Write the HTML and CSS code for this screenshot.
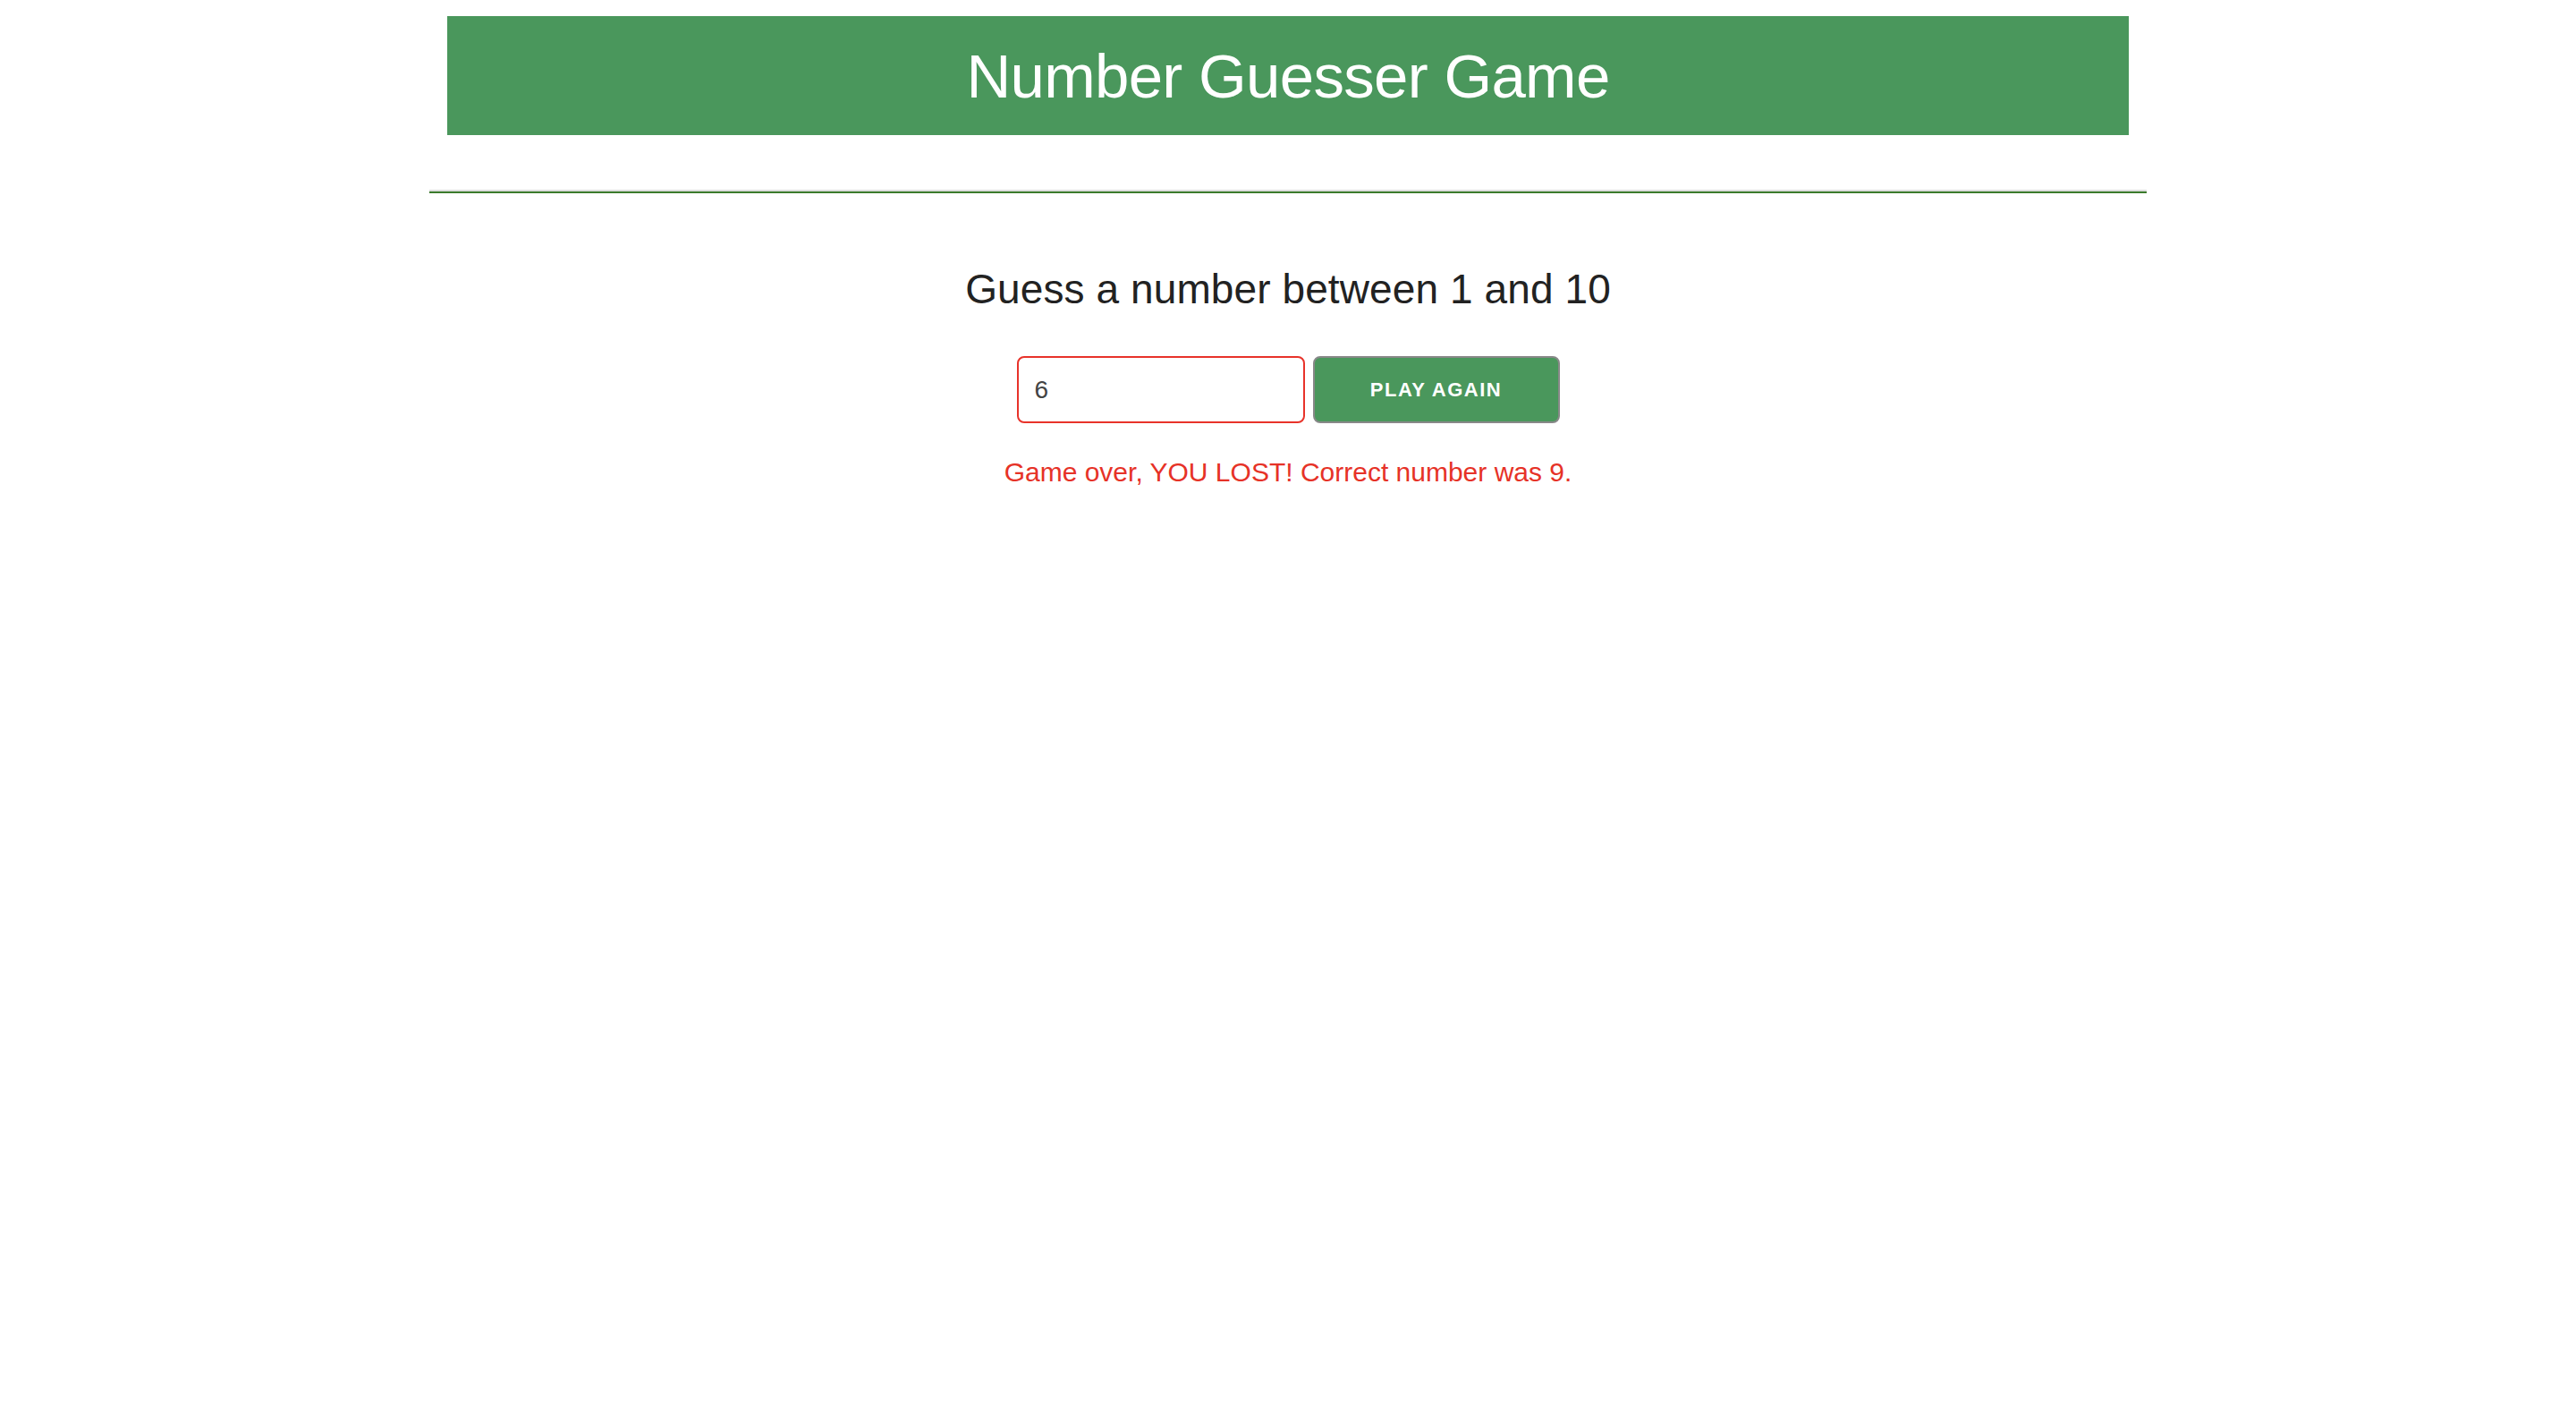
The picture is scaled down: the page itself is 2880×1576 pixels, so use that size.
FILE: index.html
```html
<!DOCTYPE html>
<html lang="en">
<head>
<meta charset="utf-8">
<title>Number Guesser Game</title>
<link rel="stylesheet" href="styles.css">
</head>
<body>
<div class="container">
  <header class="banner">
    <h1 class="title">Number Guesser Game</h1>
  </header>
  <div class="divider"></div>
  <main class="game">
    <h2 class="prompt">Guess a number between 1 and 10</h2>
    <div class="controls">
      <input class="guess-input" type="number" value="6">
      <button class="play-btn" type="button">Play Again</button>
    </div>
    <p class="message">Game over, YOU LOST! Correct number was 9.</p>
  </main>
</div>
</body>
</html>
```

FILE: styles.css
```css
html, body {
  margin: 0;
  padding: 0;
  background: #ffffff;
}

body {
  font-family: "Liberation Sans", Arial, Helvetica, sans-serif;
  color: #222222;
}

.container {
  max-width: 1920px;
  margin: 0 auto;
}

.banner {
  margin: 18px 20px 0;
  background: #4a975c;
  padding-top: 2px;
  height: 131px;
}

.title {
  margin: 0;
  font-size: 69px;
  font-weight: normal;
  line-height: 131px;
  text-align: center;
  color: #ffffff;
  letter-spacing: -0.7px;
}

.divider {
  margin-top: 61px;
  border-top: 2px solid #dddddd;
  border-bottom: 2px solid #3b7b2c;
}

.game {
  display: flex;
  flex-direction: column;
  align-items: center;
}

.prompt {
  margin: 80px 0 0;
  font-size: 46px;
  font-weight: normal;
  line-height: 54px;
  color: #222222;
  letter-spacing: 0.1px;
}

.controls {
  margin-top: 48px;
  display: flex;
  gap: 9px;
}

.guess-input {
  box-sizing: border-box;
  width: 322px;
  height: 75px;
  border: 2px solid #e8332a;
  border-radius: 8px;
  padding: 0 18px;
  font-family: "Liberation Sans", Arial, sans-serif;
  font-size: 28px;
  color: #444444;
  outline: none;
  -moz-appearance: textfield;
  appearance: textfield;
}

.guess-input::-webkit-inner-spin-button,
.guess-input::-webkit-outer-spin-button {
  -webkit-appearance: none;
  margin: 0;
}

.play-btn {
  box-sizing: border-box;
  width: 276px;
  height: 75px;
  background: #4a975c;
  border: 2px solid #888888;
  border-radius: 8px;
  color: #ffffff;
  font-family: "Liberation Sans", Arial, sans-serif;
  font-size: 22px;
  font-weight: bold;
  letter-spacing: 1.5px;
  text-transform: uppercase;
  cursor: pointer;
}

.message {
  margin: 37px 0 0;
  font-size: 30px;
  line-height: 36px;
  color: #e63227;
}
```
